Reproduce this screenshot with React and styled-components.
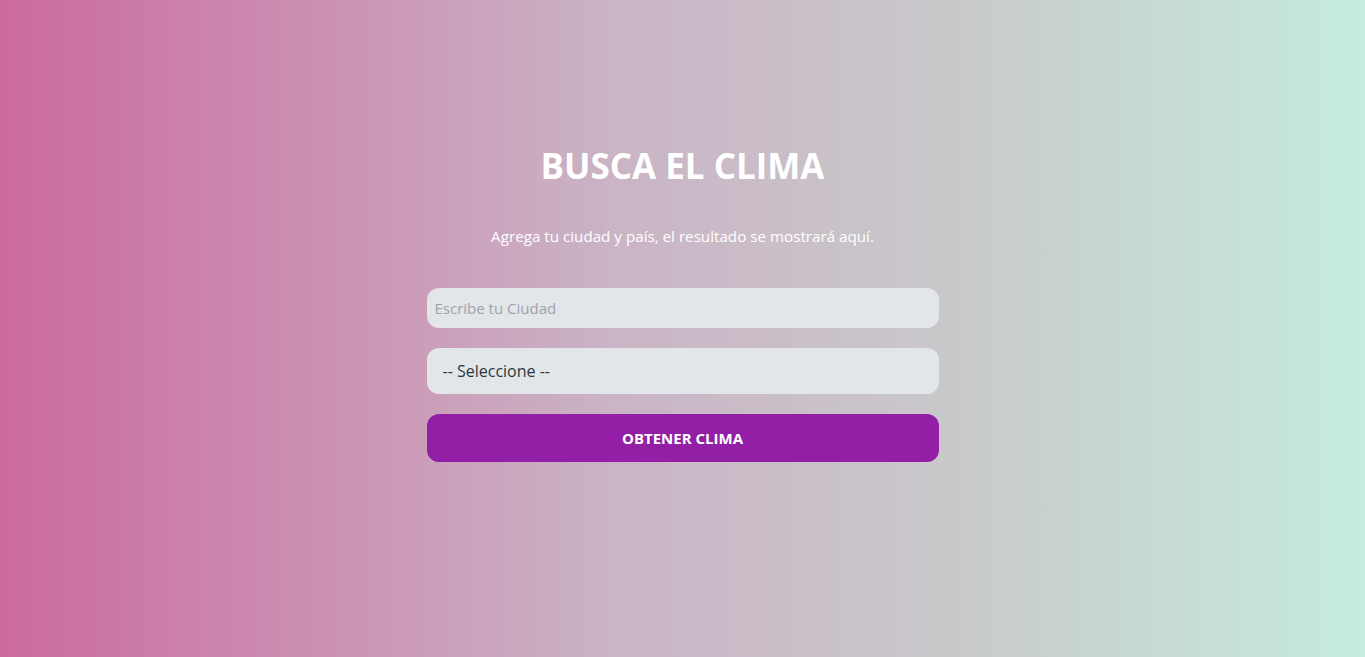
import React from "react";
import styled, { createGlobalStyle } from "styled-components";

const Global = createGlobalStyle`
  html, body { margin: 0; padding: 0; }
  body {
    font-family: "Open Sans", "Noto Sans", sans-serif;
    min-height: 100vh;
    background: linear-gradient(to right, #cc6a9f 0%, #cab4c5 45%, #c9c9cb 70%, #c5ecdd 100%);
  }
  * { box-sizing: border-box; }
`;

const Page = styled.main`
  min-height: 100vh;
  display: flex;
  flex-direction: column;
  align-items: center;
  padding-top: 141px;
`;

const Title = styled.h1`
  margin: 0;
  color: #fff;
  font-size: 35px;
  font-weight: 700;
  line-height: 50px;
`;

const Subtitle = styled.p`
  margin: 35px 0 0;
  color: #fff;
  font-size: 15.2px;
  line-height: 20px;
`;

const Form = styled.form`
  width: 512px;
  margin-top: 42px;
  display: flex;
  flex-direction: column;
`;

const Field = styled.input`
  height: 40px;
  border: none;
  border-radius: 12px;
  background: #e2e6e9;
  padding: 0 8px;
  font-family: inherit;
  font-size: 15px;
  color: #333;
  outline: none;
  &::placeholder { color: #9aa4ad; }
`;

const Select = styled.select`
  margin-top: 20px;
  height: 46px;
  border: none;
  border-radius: 12px;
  background: #e2e6e9;
  padding: 0 16px;
  font-family: inherit;
  font-size: 16px;
  color: #2a3640;
  appearance: none;
  outline: none;
`;

const Button = styled.button`
  margin-top: 20px;
  height: 48px;
  border: none;
  border-radius: 12px;
  background: #921fa5;
  color: #fff;
  font-family: inherit;
  font-weight: 700;
  font-size: 15px;
  text-transform: uppercase;
  cursor: pointer;
`;

export default function App() {
  return (
    <>
      <Global />
      <Page>
        <Title>BUSCA EL CLIMA</Title>
        <Subtitle>Agrega tu ciudad y país, el resultado se mostrará aquí.</Subtitle>
        <Form onSubmit={(e) => e.preventDefault()}>
          <Field type="text" placeholder="Escribe tu Ciudad" />
          <Select defaultValue="">
            <option value="">-- Seleccione --</option>
          </Select>
          <Button type="submit">Obtener Clima</Button>
        </Form>
      </Page>
    </>
  );
}
